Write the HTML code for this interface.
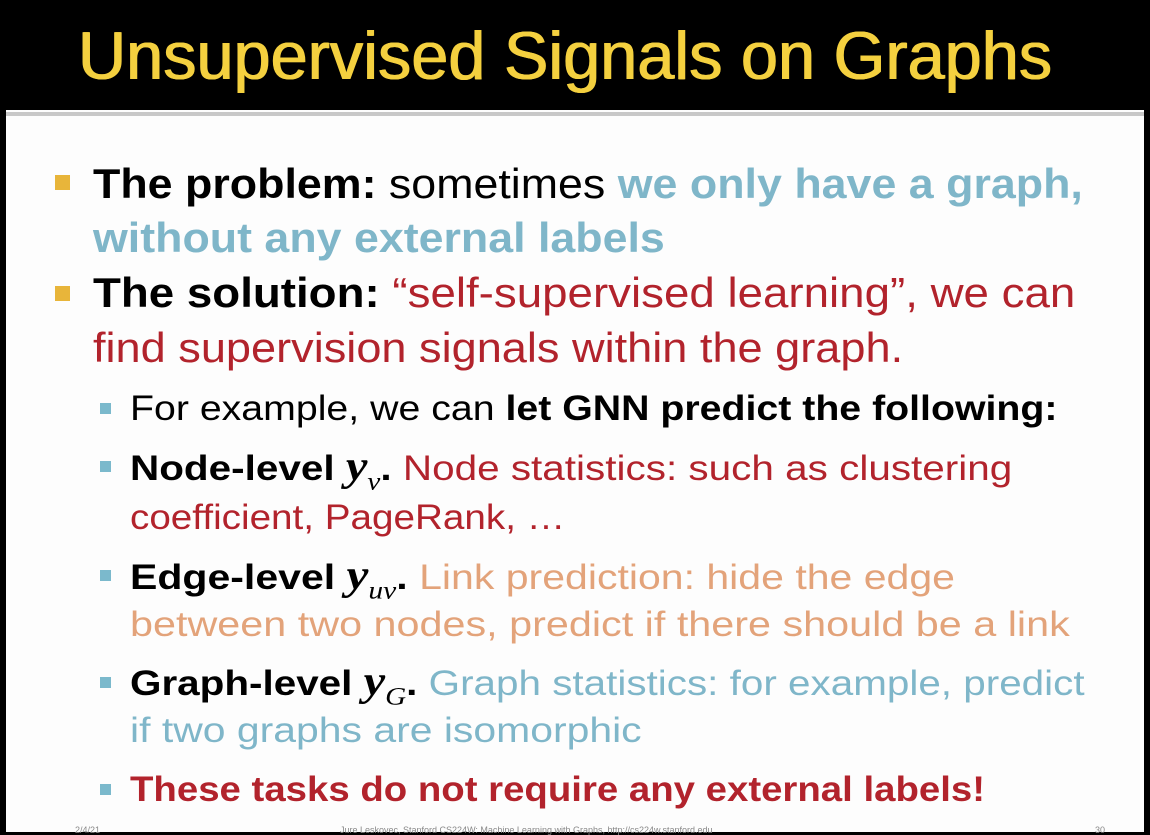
<!DOCTYPE html>
<html><head><meta charset="utf-8"><style>
html,body{margin:0;padding:0}
body{width:1150px;height:832px;overflow:hidden;background:#000;position:relative;font-family:"Liberation Sans",sans-serif}
#w{position:absolute;left:6px;top:110px;width:1138px;height:722px;background:#fdfdfd}
#ln{position:absolute;left:6px;top:112px;width:1138px;height:4px;background:#c8c8c8}
.t{position:absolute;white-space:nowrap;transform-origin:0 0;line-height:1}
.b{font-weight:bold}
.sq{position:absolute;width:15px;height:15px;background:#e8b53a}
.sq2{position:absolute;width:11px;height:11px;background:#7bb9cc}
.m{font-family:"Liberation Serif",serif;font-style:italic;font-weight:bold;font-size:1.2em;line-height:0}
.m sub{font-size:0.6em;font-weight:normal;line-height:0}
.blue{color:#7fb6c9}.red{color:#b2232c}.org{color:#e3a37a}
</style></head><body>
<div id="w"></div><div id="ln"></div>
<div class="t" style="left:78px;top:22px;font-size:68px;color:#f4d03f;text-shadow:0.6px 0 0 #f4d03f,-0.6px 0 0 #f4d03f" id="l0">Unsupervised Signals on Graphs</div>
<div class="sq" style="left:55px;top:175px"></div>
<div class="t" style="left:93px;top:163px;font-size:42px" id="l1"><span class="b">The problem:</span> sometimes <span class="b blue">we only have a graph,</span></div>
<div class="t b blue" style="left:93px;top:217px;font-size:42px" id="l2">without any external labels</div>
<div class="sq" style="left:55px;top:286px"></div>
<div class="t" style="left:93px;top:272px;font-size:42px" id="l3"><span class="b">The solution:</span> <span class="red">“self-supervised learning”, we can</span></div>
<div class="t red" style="left:93px;top:327px;font-size:42px" id="l4">find supervision signals within the graph.</div>
<div class="sq2" style="left:100px;top:403px"></div>
<div class="t" style="left:130px;top:391px;font-size:35px" id="l5">For example, we can <span class="b">let GNN predict the following:</span></div>
<div class="sq2" style="left:100px;top:461px"></div>
<div class="t" style="left:130px;top:451px;font-size:35px" id="l6"><span class="b">Node-level <span class="m">y<sub>v</sub></span>.</span> <span class="red">Node statistics: such as clustering</span></div>
<div class="t red" style="left:130px;top:500px;font-size:35px" id="l7">coefficient, PageRank, …</div>
<div class="sq2" style="left:100px;top:570px"></div>
<div class="t" style="left:130px;top:560px;font-size:35px" id="l8"><span class="b">Edge-level <span class="m">y<sub>uv</sub></span>.</span> <span class="org">Link prediction: hide the edge</span></div>
<div class="t org" style="left:130px;top:607px;font-size:35px" id="l9">between two nodes, predict if there should be a link</div>
<div class="sq2" style="left:100px;top:677px"></div>
<div class="t" style="left:130px;top:666px;font-size:35px" id="l10"><span class="b">Graph-level <span class="m">y<sub>G</sub></span>.</span> <span class="blue">Graph statistics: for example, predict</span></div>
<div class="t blue" style="left:130px;top:713px;font-size:35px" id="l11">if two graphs are isomorphic</div>
<div class="sq2" style="left:100px;top:784px"></div>
<div class="t b red" style="left:130px;top:772px;font-size:35px" id="l12">These tasks do not require any external labels!</div>
<div class="t" style="left:75px;top:826px;font-size:9px;color:#888">2/4/21</div>
<div class="t" style="left:340px;top:826px;font-size:9px;color:#888">Jure Leskovec, Stanford CS224W: Machine Learning with Graphs, http://cs224w.stanford.edu</div>
<div class="t" style="left:1095px;top:826px;font-size:9px;color:#888">30</div>
<script>
var W=[974,990,572,982,810,928,882,435,825,940,955,512,855];
W.forEach(function(w,i){var e=document.getElementById('l'+i);var s=w/e.scrollWidth;e.style.transform='scaleX('+s+')';});
</script>
</body></html>
